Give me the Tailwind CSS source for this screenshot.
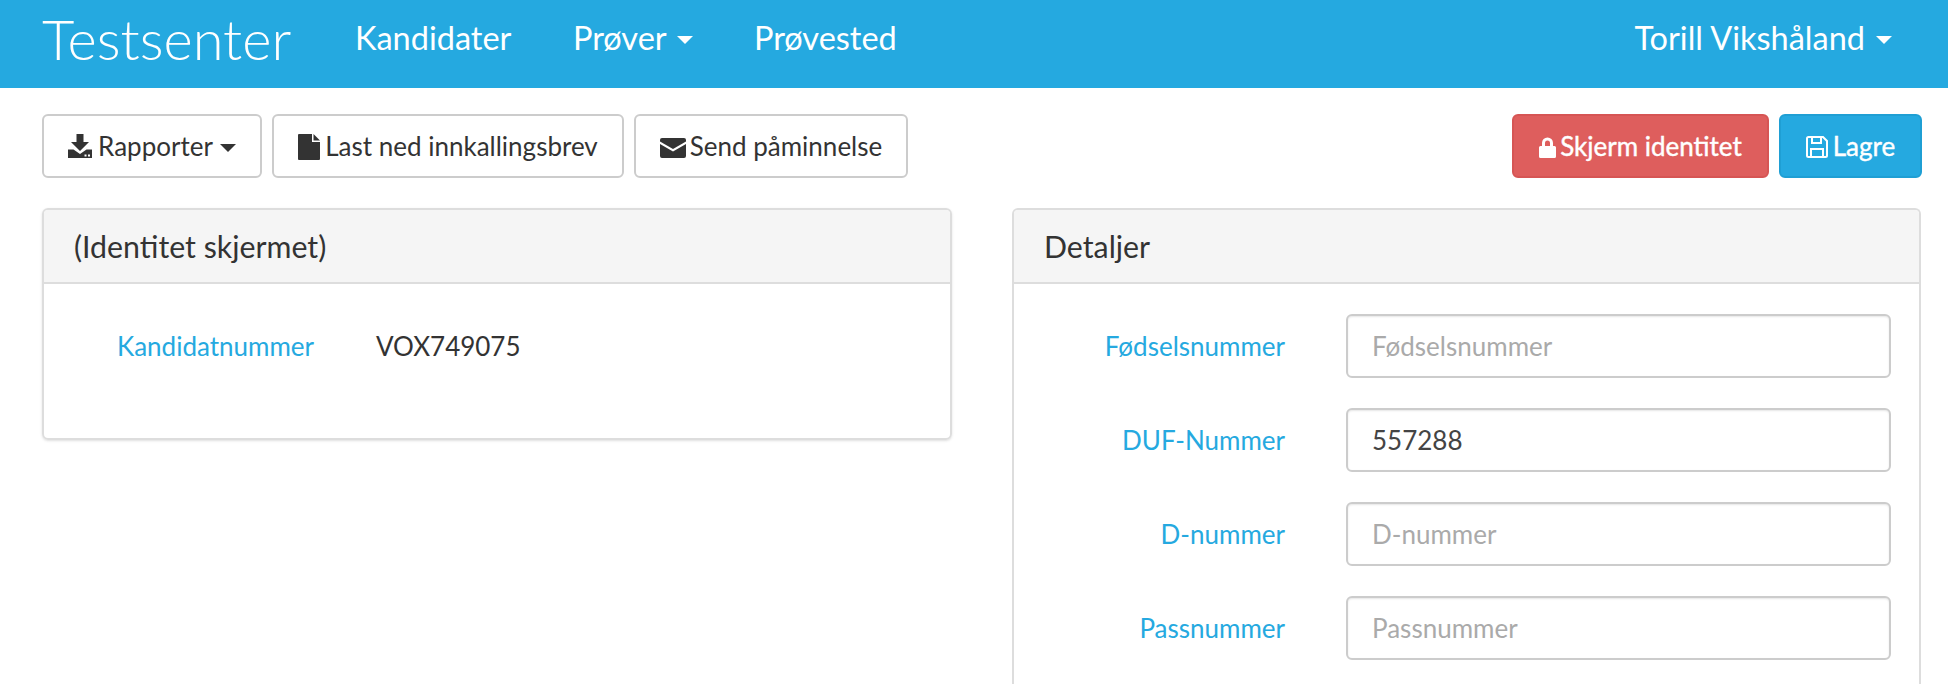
<!DOCTYPE html>
<html lang="no">
<head>
    <meta charset="UTF-8">
    <title>Testsenter</title>
    <script src="https://cdn.jsdelivr.net/npm/@tailwindcss/browser@4"></script>
</head>
<body class="bg-white text-[#333] font-['Lato',sans-serif] text-[26px] overflow-hidden h-[684px]">

    <!-- Navbar -->
    <nav class="h-[88px] bg-[#25a9e0] text-white flex items-start pl-[42px] pr-[56px]">
        <a class="text-[56px] font-light leading-[78px] w-[313px]">Testsenter</a>
        <a class="text-[32.500px] leading-[76px] w-[218px]">Kandidater</a>
        <a class="text-[32.500px] leading-[76px] w-[181px] flex items-center">Prøver <span class="ml-[10px] mt-[3px] border-x-[8px] border-x-transparent border-t-[8px] border-t-white"></span></a>
        <a class="text-[32.500px] leading-[76px]">Prøvested</a>
        <a class="text-[32.500px] leading-[76px] ml-auto flex items-center">Torill Vikshåland <span class="ml-[11px] mt-[3px] border-x-[8px] border-x-transparent border-t-[8px] border-t-white"></span></a>
    </nav>

    <!-- Toolbar -->
    <div class="flex justify-between pl-[42px] pr-[26px] mt-[26px]">
        <div class="flex gap-[10px]">
            <button class="h-[64px] w-[220px] bg-white border-2 border-[#ccc] rounded-[6px] flex items-center justify-center">
                <svg class="w-[24px] h-[24px] mr-[6px]" viewBox="0 0 24 24" fill="#333"><path d="M8.500 0h7v8H21l-9 9-9-9h5.500z"/><path d="M0 15.500h5.500L12 20l6.500-4.500H24V24H0z"/><path d="M16.500 20.500h2v2h-2zM20 20.500h2v2h-2z" fill="#fff"/></svg>
                Rapporter
                <span class="ml-[7px] mt-[3px] border-x-[8px] border-x-transparent border-t-[8px] border-t-[#333]"></span>
            </button>
            <button class="h-[64px] w-[352px] bg-white border-2 border-[#ccc] rounded-[6px] flex items-center justify-center">
                <svg class="w-[22px] h-[26px] mr-[5px] mt-[2px]" viewBox="0 0 22 26" fill="#333"><path d="M1 0h13v8h8v17a1 1 0 0 1-1 1H1a1 1 0 0 1-1-1V1a1 1 0 0 1 1-1z"/><path d="M15.500 0L22 6.500h-6.500z"/></svg>
                Last ned innkallingsbrev
            </button>
            <button class="h-[64px] w-[274px] bg-white border-2 border-[#ccc] rounded-[6px] flex items-center justify-center">
                <svg class="w-[26px] h-[20px] mr-[4px] mt-[4px]" viewBox="0 0 26 20" fill="#333"><path d="M2 0h22a2 2 0 0 1 2 2v1.500L13 11 0 3.500V2a2 2 0 0 1 2-2z"/><path d="M0 6l13 7.500L26 6v12a2 2 0 0 1-2 2H2a2 2 0 0 1-2-2z"/></svg>
                Send påminnelse
            </button>
        </div>
        <div class="flex gap-[10px]">
            <button class="h-[64px] w-[257px] bg-[#de5e5d] border-2 border-[#d65554] text-white [-webkit-text-stroke:0.4px_white] rounded-[6px] flex items-center justify-center">
                <svg class="w-[17px] h-[21px] mr-[4px] mt-[2px]" viewBox="0 0 17 21" fill="#fff"><path d="M3 9V6a5.500 5.500 0 0 1 11 0v3h1.500A1.500 1.500 0 0 1 17 10.500v9a1.500 1.500 0 0 1-1.500 1.500h-14A1.500 1.500 0 0 1 0 19.500v-9A1.500 1.500 0 0 1 1.500 9zM6 9h5V6a2.500 2.500 0 0 0-5 0z"/></svg>
                Skjerm identitet
            </button>
            <button class="h-[64px] w-[143px] bg-[#25a9e0] border-2 border-[#1f9fd4] text-white [-webkit-text-stroke:0.4px_white] rounded-[6px] flex items-center justify-center">
                <svg class="w-[22px] h-[22px] mr-[5px] mt-[2px]" viewBox="0 0 22 22" fill="none" stroke="#fff" stroke-width="2"><path d="M2.500 1H17l4 4v14.500a1.500 1.500 0 0 1-1.500 1.500h-17A1.500 1.500 0 0 1 1 19.500v-17A1.500 1.500 0 0 1 2.500 1z"/><path d="M6 1v6h9V1M5 21v-8h12v8"/></svg>
                Lagre
            </button>
        </div>
    </div>

    <!-- Panels -->
    <div class="flex items-start pl-[42px] pr-[26px] mt-[30px] gap-[60px]">
        <section class="w-[910px] h-[232px] border-2 border-[#ddd] rounded-[6px] shadow-sm">
            <h2 class="h-[74px] bg-[#f5f5f5] border-b-2 border-[#ddd] px-[30px] leading-[72px] text-[30.300px] rounded-t-[4px]">(Identitet skjermet)</h2>
            <div class="flex pt-[46px] leading-[32px]">
                <span class="w-[270px] text-right text-[#25a9e0]">Kandidatnummer</span>
                <span class="ml-[62px]">VOX749075</span>
            </div>
        </section>

        <section class="w-[909px] h-[476px] border-2 border-b-0 border-[#ddd] rounded-t-[6px] shrink-0">
            <h2 class="h-[74px] bg-[#f5f5f5] border-b-2 border-[#ddd] px-[30px] leading-[72px] text-[30.300px] rounded-t-[4px]">Detaljer</h2>
            <form class="flex flex-col gap-[30px] pt-[30px] pl-[30px] pr-[28px]">
                <label class="flex items-center">
                    <span class="w-[241px] text-right text-[#25a9e0]">Fødselsnummer</span>
                    <input class="ml-[61px] w-[545px] h-[64px] border-2 border-[#ccc] rounded-[6px] px-[24px] shadow-[inset_0_1px_2px_rgba(0,0,0,0.1)] placeholder:text-[#aaa]" placeholder="Fødselsnummer">
                </label>
                <label class="flex items-center">
                    <span class="w-[241px] text-right text-[#25a9e0]">DUF-Nummer</span>
                    <input class="ml-[61px] w-[545px] h-[64px] border-2 border-[#ccc] rounded-[6px] px-[24px] shadow-[inset_0_1px_2px_rgba(0,0,0,0.1)] text-[#444]" value="557288">
                </label>
                <label class="flex items-center">
                    <span class="w-[241px] text-right text-[#25a9e0]">D-nummer</span>
                    <input class="ml-[61px] w-[545px] h-[64px] border-2 border-[#ccc] rounded-[6px] px-[24px] shadow-[inset_0_1px_2px_rgba(0,0,0,0.1)] placeholder:text-[#aaa]" placeholder="D-nummer">
                </label>
                <label class="flex items-center">
                    <span class="w-[241px] text-right text-[#25a9e0]">Passnummer</span>
                    <input class="ml-[61px] w-[545px] h-[64px] border-2 border-[#ccc] rounded-[6px] px-[24px] shadow-[inset_0_1px_2px_rgba(0,0,0,0.1)] placeholder:text-[#aaa]" placeholder="Passnummer">
                </label>
            </form>
        </section>
    </div>

</body>
</html>
